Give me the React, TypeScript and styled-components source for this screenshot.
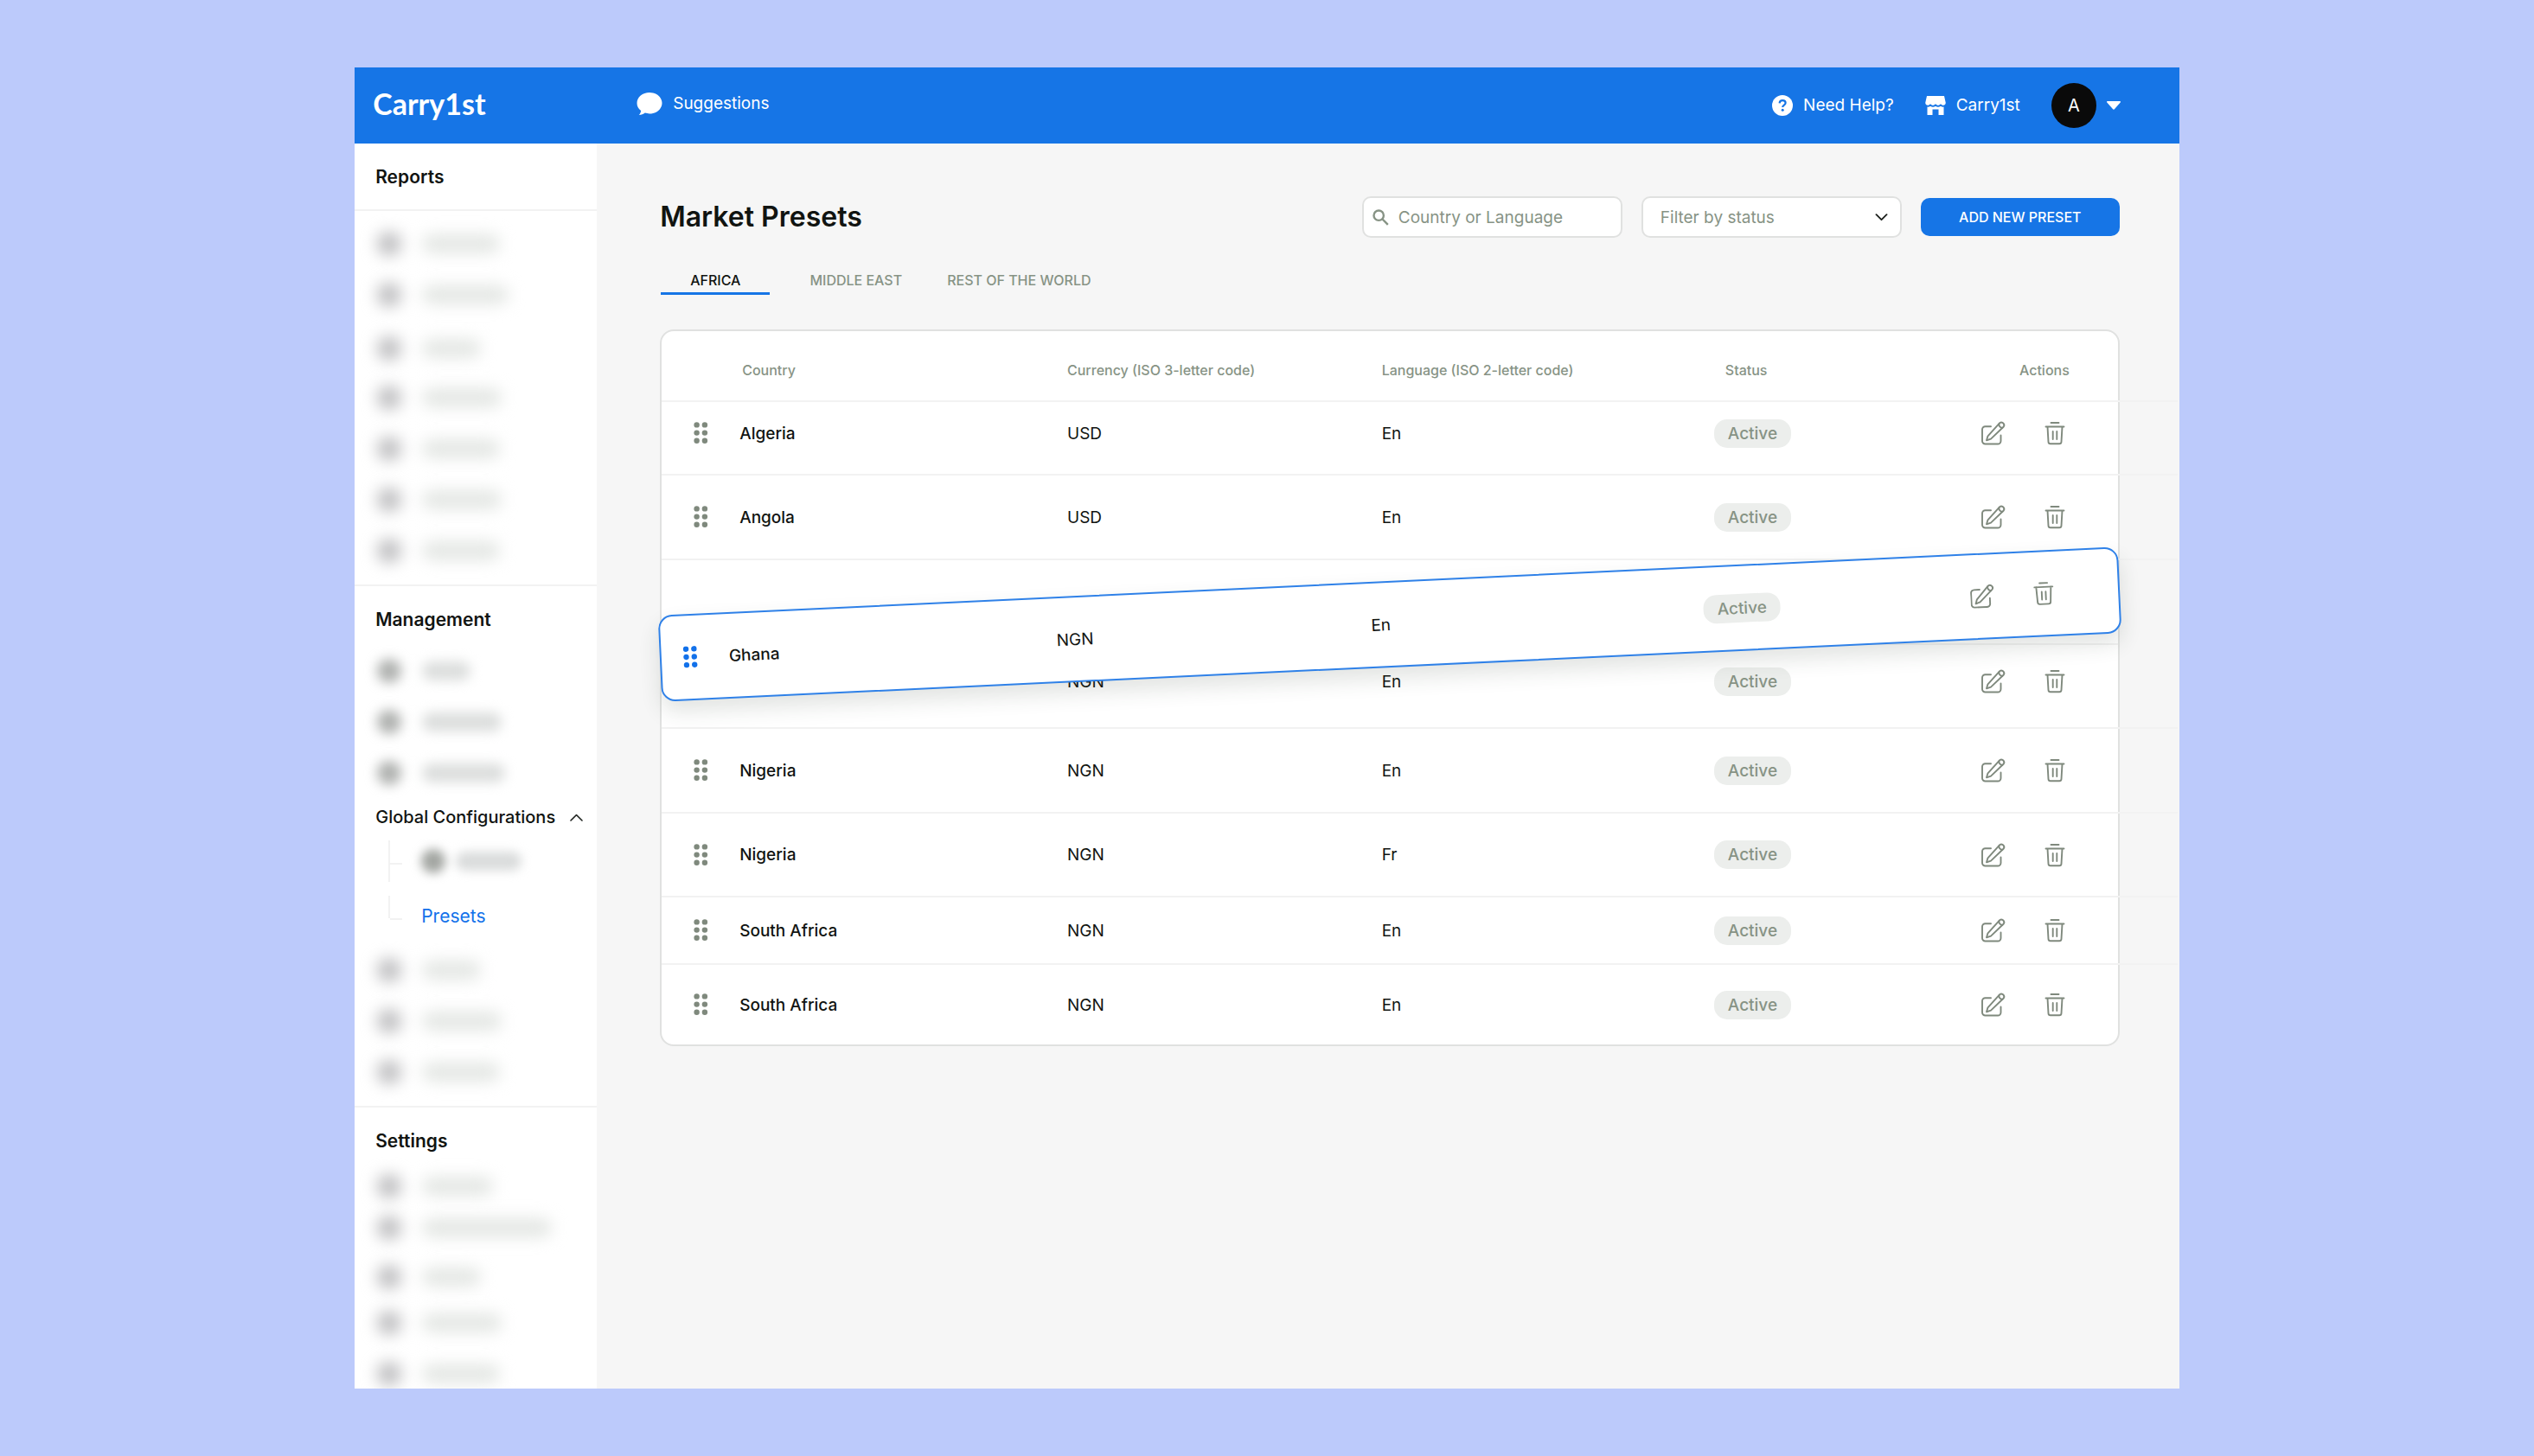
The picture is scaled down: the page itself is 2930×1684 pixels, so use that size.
import React from "react";
import styled, { createGlobalStyle, css } from "styled-components";

const color = {
  backdrop: "#bccafb",
  blue: "#1675e6",
  link: "#1271ea",
  ink: "#111411",
  text: "#1d211d",
  sage: "#879385",
  icon: "#7f897d",
  line: "#f2f2f2",
  border: "#e0e1e0",
  page: "#f6f6f6",
  white: "#ffffff",
};

const GlobalStyle = createGlobalStyle`
  * { box-sizing: border-box; }
  body {
    margin: 0;
    background: ${color.backdrop};
    color: ${color.ink};
    font-family: Inter, "Liberation Sans", sans-serif;
    font-size: 19px;
    font-weight: 400;
  }
  button, input, select { font: inherit; color: inherit; }
  button { border: 0; padding: 0; background: none; cursor: pointer; }
  a { color: inherit; text-decoration: none; }
  ul { list-style: none; margin: 0; padding: 0; }
  svg { display: block; flex: none; }
`;

const Backdrop = styled.div`
  padding: 78px 14%;
`;

const Window = styled.div`
  display: flex;
  flex-direction: column;
  height: calc(100vh - 156px);
  overflow: hidden;
  background: ${color.page};
`;

const Header = styled.header`
  display: flex;
  align-items: center;
  flex: none;
  height: 88px;
  padding: 0 68px 0 21px;
  background: ${color.blue};
  color: ${color.white};
`;

const HeaderStart = styled.div`
  display: flex;
  align-items: center;
  padding-bottom: 4px;
`;

const Logo = styled.a`
  width: 305px;
  font-family: Lato, "Liberation Sans", sans-serif;
  font-size: 34px;
  font-weight: 700;
  line-height: 44px;
`;

const HeaderLink = styled.a`
  display: flex;
  align-items: center;
  gap: 12px;
  line-height: 24px;
`;

const HeaderEnd = styled.div`
  display: flex;
  align-items: center;
  gap: 36px;
  margin-left: auto;
`;

const Account = styled.button`
  display: flex;
  align-items: center;
  gap: 12px;
`;

const Avatar = styled.span`
  display: grid;
  place-items: center;
  width: 52px;
  height: 52px;
  border-radius: 50%;
  background: #0a0a0a;
  font-size: 20px;
`;

const Body = styled.div`
  display: flex;
  flex: 1;
  min-height: 0;
`;

const Sidebar = styled.nav`
  flex: none;
  width: 280px;
  background: ${color.white};
`;

const Section = styled.section`
  padding-top: 25px;
`;

const Heading = styled.h2<{ $ruled?: boolean }>`
  margin: 0;
  padding: 0 24px;
  font-size: 21px;
  font-weight: 600;
  line-height: 28px;
  ${(p) =>
    p.$ruled &&
    css`
      padding-bottom: 23px;
      border-bottom: 2px solid ${color.line};
    `}
`;

const Divider = styled.hr`
  height: 2px;
  margin: 19px 0 0;
  border: 0;
  background: ${color.line};
`;

const List = styled.ul<{ $top: number }>`
  padding: ${(p) => p.$top}px 0 0 26px;
`;

const Veiled = styled.li<{ $space?: number; $blur?: number }>`
  display: flex;
  align-items: center;
  gap: 24px;
  height: 40px;
  filter: blur(${(p) => p.$blur ?? 8}px);
  &:not(:first-child) {
    margin-top: ${(p) => p.$space ?? 19}px;
  }
`;

const Blob = styled.span<{ $tone: string }>`
  width: 28px;
  height: 28px;
  border-radius: 50%;
  background: ${(p) => p.$tone};
`;

const Bar = styled.span<{ $width: number; $tone: string }>`
  width: ${(p) => p.$width}px;
  height: 22px;
  border-radius: 11px;
  background: ${(p) => p.$tone};
`;

const Toggle = styled.button`
  display: flex;
  align-items: center;
  gap: 17px;
  height: 42px;
  margin-top: 10px;
  padding-left: 24px;
  font-size: 20px;
  font-weight: 500;
  line-height: 28px;
`;

const Tree = styled.ul`
  display: flex;
  flex-direction: column;
  gap: 16px;
  padding: 6px 0 0 39px;
`;

const Leaf = styled.li`
  display: flex;
  height: 48px;
  color: ${color.link};
  font-size: 21px;
  line-height: 48px;
`;

const Branch = styled.span<{ $last?: boolean }>`
  width: 16px;
  border-left: 2px solid ${color.line};
  margin-right: 22px;
  &::before {
    content: "";
    display: block;
    height: 26px;
    border-bottom: 2px solid ${color.line};
  }
  ${(p) =>
    p.$last &&
    css`
      height: 26px;
    `}
`;

const VeiledLeaf = styled.span`
  display: flex;
  align-items: center;
  gap: 12px;
  filter: blur(6px);
`;

const Main = styled.main`
  flex: 1;
  min-width: 0;
  overflow: hidden;
  padding: 61px 69px 0 73px;
`;

const TitleRow = styled.div`
  display: flex;
  align-items: center;
  gap: 22px;
`;

const Title = styled.h1`
  flex: 1;
  margin: 0;
  font-size: 32px;
  font-weight: 600;
  line-height: 48px;
`;

const field = css`
  width: 301px;
  height: 48px;
  border: 2px solid ${color.border};
  border-radius: 10px;
  background: ${color.white};
  color: ${color.sage};
`;

const Search = styled.label`
  ${field}
  display: flex;
  align-items: center;
  gap: 11px;
  padding: 0 12px 0 10px;
`;

const SearchInput = styled.input`
  flex: 1;
  min-width: 0;
  padding: 0;
  border: 0;
  outline: 0;
  background: none;
  &::placeholder {
    color: ${color.sage};
    opacity: 1;
  }
`;

const Filter = styled.label`
  display: grid;
  align-items: center;
  > * {
    grid-area: 1 / 1;
  }
  > svg {
    justify-self: end;
    margin-right: 16px;
    pointer-events: none;
  }
`;

const FilterSelect = styled.select`
  ${field}
  padding: 0 20px;
  appearance: none;
`;

const Primary = styled.button`
  width: 230px;
  height: 44px;
  border-radius: 10px;
  background: ${color.blue};
  color: ${color.white};
  font-size: 16px;
  font-weight: 500;
`;

const Tabs = styled.div`
  display: flex;
  gap: 46px;
  margin-top: 36px;
  padding-left: 1px;
`;

const Tab = styled.button<{ $active?: boolean }>`
  height: 30px;
  padding: 0 6px 2px 0;
  border-bottom: 3px solid transparent;
  color: ${color.sage};
  font-size: 16px;
  font-weight: 500;
  line-height: 24px;
  ${(p) =>
    p.$active &&
    css`
      padding: 0 34px 2px;
      border-color: ${color.blue};
      color: ${color.ink};
    `}
`;

const Card = styled.div`
  position: relative;
  margin-top: 40px;
  border: 2px solid ${color.border};
  border-radius: 16px;
  background: ${color.white};
`;

const Table = styled.table`
  width: 100%;
  table-layout: fixed;
  border-collapse: separate;
  border-spacing: 0;
  text-align: left;
`;

const Grip = styled.col<{ $width: number }>`
  width: ${(p) => p.$width}px;
`;

const Col = styled.col<{ $share: number }>`
  width: ${(p) => p.$share}%;
`;

const cell = css`
  padding: 0;
  border-bottom: 2px solid ${color.line};
  &:first-child {
    padding-left: 37px;
  }
  &:last-child {
    position: relative;
  }
  &:last-child::after {
    content: "";
    position: absolute;
    left: 100%;
    bottom: -2px;
    width: 69px;
    height: 2px;
    background: ${color.line};
  }
`;

const Head = styled.th<{ $indent?: number }>`
  ${cell}
  height: 82px;
  color: ${color.sage};
  font-size: 16px;
  font-weight: 500;
  padding-top: 10px;
  padding-left: ${(p) => p.$indent ?? 0}px;
`;

const HeadEnds = styled.div`
  display: flex;
  justify-content: space-between;
  padding-right: 56px;
`;

const Row = styled.tr<{ $height: number; $lift?: boolean; $bare?: boolean; $open?: boolean; $dragged?: boolean }>`
  height: ${(p) => p.$height}px;
  td {
    ${cell}
    padding-bottom: ${(p) => (p.$lift ? 11 : 0)}px;
  }
  td:nth-child(2) {
    font-weight: 500;
  }
  ${(p) =>
    (p.$bare || p.$dragged) &&
    css`
      td {
        border-bottom: 0;
      }
    `}
  ${(p) =>
    (p.$bare || p.$open || p.$dragged) &&
    css`
      td:last-child::after {
        display: none;
      }
    `}
  ${(p) =>
    p.$dragged &&
    css`
      td:first-child {
        padding-left: 25px;
      }
    `}
`;

const Badge = styled.span`
  display: inline-block;
  margin-left: 2px;
  padding: 0 16px;
  border-radius: 15px;
  background: #eceeec;
  color: ${color.sage};
  font-weight: 500;
  line-height: 33px;
`;

const StatusActions = styled.div`
  display: flex;
  align-items: center;
  justify-content: space-between;
`;

const Actions = styled.div<{ $end: number }>`
  display: flex;
  gap: 45px;
  padding: 0 ${(p) => p.$end}px 0 0;
  color: ${color.icon};
`;

const Dragged = styled.div`
  position: absolute;
  top: 289px;
  left: -3px;
  right: -3px;
  border: 2px solid #2f81e8;
  border-radius: 16px;
  background: ${color.white};
  box-shadow: 0 12px 24px rgba(50, 65, 50, 0.14);
  transform: rotate(-2.7deg);
`;

const Dots = ({ fill = color.icon }: { fill?: string }) => (
  <svg width="17" height="26" viewBox="0 0 17 26" fill={fill} aria-hidden="true">
    {[3.4, 12.6, 21.8].map((y) => (
      <g key={y}>
        <circle cx="3.6" cy={y} r="3.2" />
        <circle cx="12.9" cy={y} r="3.2" />
      </g>
    ))}
  </svg>
);

const EditIcon = () => (
  <svg width="28" height="28" viewBox="0 0 28 28" fill="none" stroke="currentColor" strokeWidth="1.9" strokeLinecap="round" strokeLinejoin="round">
    <path d="M11 6.2H4.500A3.500 3.500 0 0 0 1 9.700V23a3.500 3.500 0 0 0 3.500 3.500H19A3.500 3.500 0 0 0 22.500 23v-6.500" />
    <path d="M6 22.300l1.500-5L20.600 2.800a3 3 0 0 1 4.900 4L11 20.600z" />
    <path d="M20.600 2.800c-.8 2.400.6 4.600 3.600 5.200" />
  </svg>
);

const TrashIcon = () => (
  <svg width="24" height="28" viewBox="0 0 24 28" fill="none" stroke="currentColor" strokeWidth="1.900" strokeLinecap="round" strokeLinejoin="round">
    <path d="M7.500 2h9M1.500 6.500h21M3.500 6.500l1 17.500a2.400 2.400 0 0 0 2.400 2.300h10.200a2.400 2.400 0 0 0 2.400-2.300l1-17.500M9.700 12v9M14.300 12v9" />
  </svg>
);

const ChatIcon = () => (
  <svg width="30" height="28" viewBox="0 0 30 28" fill="currentColor" aria-hidden="true">
    <path d="M15 1C7 1 .5 6.400.5 13.200c0 3.800 1.800 6.700 4.600 8.900-.2 1.900-1 3.600-2.300 5 2.800 0 5.200-1 7-2.500 1.600.5 3.400.8 5.200.8 8 0 14.500-5.400 14.500-12.200S23 1 15 1z" />
  </svg>
);

const HelpIcon = () => (
  <svg width="24" height="24" viewBox="0 0 24 24" aria-hidden="true">
    <circle cx="12" cy="12" r="12" fill="currentColor" />
    <path d="M8.600 9.300c.2-2 1.600-3.100 3.500-3.100 2 0 3.500 1.100 3.500 2.900 0 2.600-3.400 2.500-3.400 4.900" fill="none" stroke={color.blue} strokeWidth="2.200" />
    <circle cx="12.200" cy="17.200" r="1.500" fill={color.blue} />
  </svg>
);

const StoreIcon = () => (
  <svg width="24" height="22" viewBox="0 0 24 22" aria-hidden="true">
    <path fill="currentColor" d="M2 0h20l1.700 7.500c.4 1.800-1 3.300-2.700 3.300-1.300 0-2.400-.6-3-1.500-.7.900-1.800 1.500-3 1.500s-2.300-.6-3-1.500c-.7.900-1.800 1.500-3 1.500s-2.300-.6-3-1.500c-.6.900-1.700 1.500-3 1.500C1.300 10.800-.1 9.300.3 7.500z" />
    <path fill="currentColor" d="M2.500 12.600c1.200.2 2.400-.1 3.500-.8 1.900 1.200 4.100 1.200 6 0 1.900 1.200 4.100 1.200 6 0 1.100.7 2.300 1 3.500.8V22h-6v-6.500h-7V22h-6z" />
  </svg>
);

const SearchIcon = () => (
  <svg width="19" height="19" viewBox="0 0 19 19" fill="none" stroke={color.sage} strokeWidth="2.400" aria-hidden="true">
    <circle cx="7.200" cy="7.200" r="5.700" />
    <path d="M11.500 11.500l6.300 6.300" />
  </svg>
);

const Chevron = ({ up = false }: { up?: boolean }) => (
  <svg width="15" height="9" viewBox="0 0 15 9" fill="none" stroke={color.text} strokeWidth={up ? 1.6 : 1.9} strokeLinecap="round" strokeLinejoin="round" aria-hidden="true">
    <path d={up ? "M1 8l6.500-6.500L14 8" : "M1.500 1.200l6 6 6-6"} />
  </svg>
);

type Entry = { width: number; space?: number };

const reports: Entry[] = [
  { width: 90 },
  { width: 100 },
  { width: 68, space: 22 },
  { width: 92, space: 17 },
  { width: 90 },
  { width: 92 },
  { width: 90 },
];
const management: Entry[] = [{ width: 56 }, { width: 92 }, { width: 96 }];
const more: Entry[] = [{ width: 68 }, { width: 92 }, { width: 90 }];
const settings: Entry[] = [
  { width: 82 },
  { width: 150, space: 8 },
  { width: 68, space: 17 },
  { width: 92, space: 13 },
  { width: 90, space: 19 },
];

const VeiledList = ({ items, top, dark }: { items: Entry[]; top: number; dark?: boolean }) => (
  <List $top={top}>
    {items.map((item, i) => (
      <Veiled key={i} $space={item.space} $blur={dark ? 7 : 9}>
        <Blob $tone={dark ? "#b0b2b0" : "#bebec0"} />
        <Bar $width={item.width} $tone={dark ? "#dcdedd" : "#e4e7e4"} />
      </Veiled>
    ))}
  </List>
);

type Preset = { country: string; currency: string; language: string; height: number; lift?: boolean };

const presets: (Preset | null)[] = [
  { country: "Algeria", currency: "USD", language: "En", height: 85, lift: true },
  { country: "Angola", currency: "USD", language: "En", height: 98 },
  null,
  { country: "", currency: "NGN", language: "En", height: 97, lift: true },
  { country: "Nigeria", currency: "NGN", language: "En", height: 98 },
  { country: "Nigeria", currency: "NGN", language: "Fr", height: 97 },
  { country: "South Africa", currency: "NGN", language: "En", height: 78 },
  { country: "South Africa", currency: "NGN", language: "En", height: 92 },
];

const Columns = ({ grip }: { grip: number }) => (
  <colgroup>
    <Grip $width={grip} />
    <Col $share={22.5} />
    <Col $share={21.6} />
    <Col $share={22.7} />
    <col />
  </colgroup>
);

const PresetRow = ({ preset, bare, dragged }: { preset: Preset; bare?: boolean; dragged?: boolean }) => (
  <Row $height={preset.height} $lift={preset.lift} $bare={bare} $dragged={dragged}>
    <td>
      <Dots fill={dragged ? color.link : color.icon} />
    </td>
    <td>{preset.country}</td>
    <td>{preset.currency}</td>
    <td>{preset.language}</td>
    <td>
      <StatusActions>
        <Badge>Active</Badge>
        <Actions $end={dragged ? 74 : 61}>
          <button aria-label="Edit preset">
            <EditIcon />
          </button>
          <button aria-label="Delete preset">
            <TrashIcon />
          </button>
        </Actions>
      </StatusActions>
    </td>
  </Row>
);

export default function App() {
  return (
    <Backdrop>
      <GlobalStyle />
      <Window>
        <Header>
          <HeaderStart>
            <Logo href="#">Carry1st</Logo>
            <HeaderLink href="#">
              <ChatIcon />
              Suggestions
            </HeaderLink>
          </HeaderStart>
          <HeaderEnd>
            <HeaderLink href="#">
              <HelpIcon />
              Need Help?
            </HeaderLink>
            <HeaderLink href="#">
              <StoreIcon />
              Carry1st
            </HeaderLink>
            <Account aria-label="Account menu">
              <Avatar>A</Avatar>
              <svg width="16" height="10" viewBox="0 0 16 10" fill="currentColor">
                <path d="M1 0h14c.9 0 1.300 1 .7 1.600l-6.600 7.500c-.6.700-1.600.7-2.200 0L.3 1.600C-.3 1 .1 0 1 0z" />
              </svg>
            </Account>
          </HeaderEnd>
        </Header>
        <Body>
          <Sidebar>
            <Section>
              <Heading $ruled>Reports</Heading>
              <VeiledList items={reports} top={18} />
            </Section>
            <Divider />
            <Section>
              <Heading>Management</Heading>
              <VeiledList items={management} top={25} dark />
              <Toggle aria-expanded="true">
                Global Configurations
                <Chevron up />
              </Toggle>
              <Tree>
                <Leaf>
                  <Branch />
                  <VeiledLeaf>
                    <Blob $tone="#a3a6a2" />
                    <Bar $width={76} $tone="#dadcdc" />
                  </VeiledLeaf>
                </Leaf>
                <Leaf>
                  <Branch $last />
                  <a href="#">Presets</a>
                </Leaf>
              </Tree>
              <VeiledList items={more} top={18} />
            </Section>
            <Divider />
            <Section>
              <Heading>Settings</Heading>
              <VeiledList items={settings} top={18} />
            </Section>
          </Sidebar>
          <Main>
            <TitleRow>
              <Title>Market Presets</Title>
              <Search>
                <SearchIcon />
                <SearchInput type="text" placeholder="Country or Language" aria-label="Country or Language" />
              </Search>
              <Filter>
                <FilterSelect aria-label="Filter by status">
                  <option>Filter by status</option>
                </FilterSelect>
                <Chevron />
              </Filter>
              <Primary>ADD NEW PRESET</Primary>
            </TitleRow>
            <Tabs>
              <Tab $active>AFRICA</Tab>
              <Tab>MIDDLE EAST</Tab>
              <Tab>REST OF THE WORLD</Tab>
            </Tabs>
            <Card>
              <Table>
                <Columns grip={90} />
                <thead>
                  <tr>
                    <Head />
                    <Head $indent={3}>Country</Head>
                    <Head>Currency (ISO 3-letter code)</Head>
                    <Head>Language (ISO 2-letter code)</Head>
                    <Head $indent={15}>
                      <HeadEnds>
                        <span>Status</span>
                        <span>Actions</span>
                      </HeadEnds>
                    </Head>
                  </tr>
                </thead>
                <tbody>
                  {presets.map((preset, i) =>
                    preset ? (
                      <PresetRow key={i} preset={preset} bare={i === presets.length - 1} />
                    ) : (
                      <Row key={i} $height={98} $open>
                        <td colSpan={5} />
                      </Row>
                    )
                  )}
                </tbody>
              </Table>
              <Dragged>
                <Table>
                  <Columns grip={78} />
                  <tbody>
                    <PresetRow preset={{ country: "Ghana", currency: "NGN", language: "En", height: 96 }} dragged />
                  </tbody>
                </Table>
              </Dragged>
            </Card>
          </Main>
        </Body>
      </Window>
    </Backdrop>
  );
}
